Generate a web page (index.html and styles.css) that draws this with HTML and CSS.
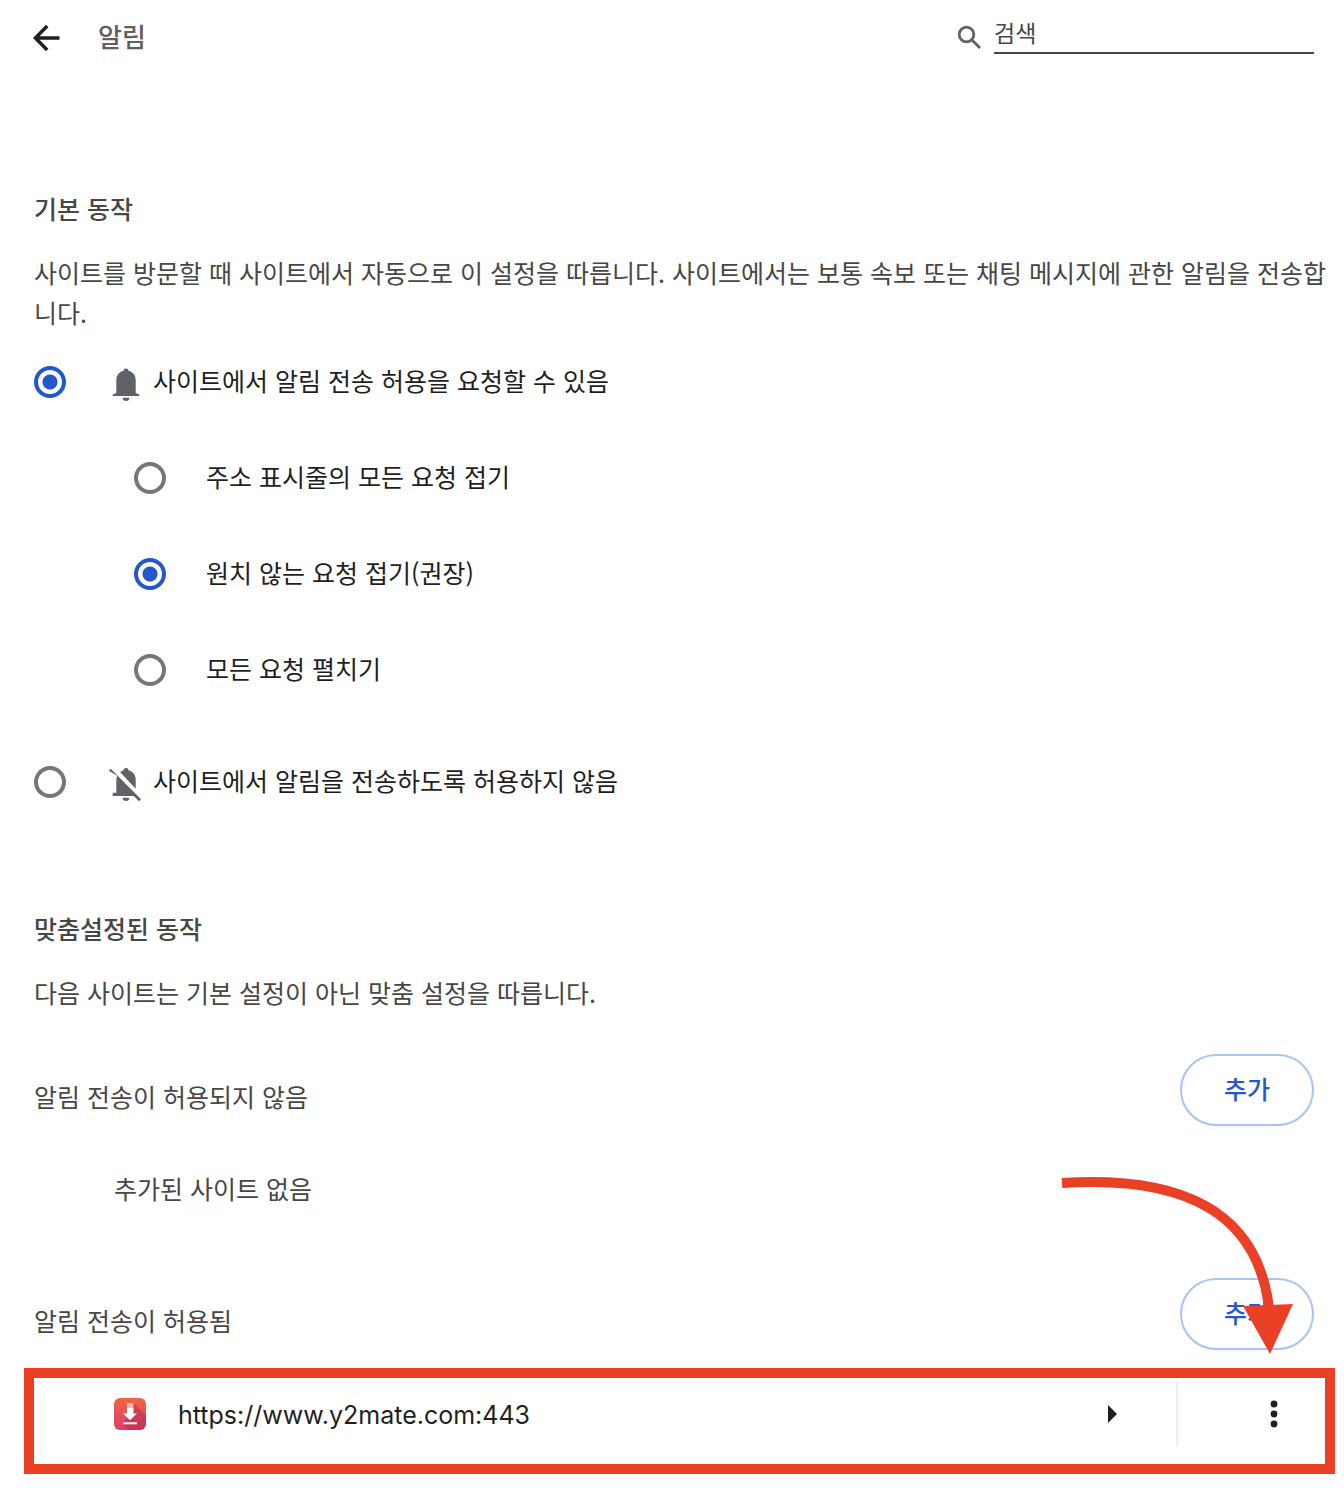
FILE: index.html
```html
<!DOCTYPE html>
<html lang="ko">
<head>
  <meta charset="UTF-8" />
  <meta name="viewport" content="width=device-width, initial-scale=1.0"/>
  <title>알림</title>
  <link rel="stylesheet" href="styles.css">
</head>
<body>
  <header class="toolbar">
    <button class="icon-button back" type="button" aria-label="뒤로">
      <svg width="28" height="28" viewBox="0 0 28 28" fill="none" stroke="#1f1f1f" stroke-width="3.4">
        <path d="M27.500 14H4M15.200 2L3.400 14l11.800 12"/>
      </svg>
    </button>
    <h1>알림</h1>
    <div class="search">
      <label for="search" aria-label="검색">
        <svg width="26" height="26" viewBox="0 0 26 26" fill="none" stroke="#5f6368" stroke-width="2.800">
          <circle cx="10.500" cy="9.500" r="7.300"/>
          <path d="M15.500 14.500l8.500 8.500"/>
        </svg>
      </label>
      <input type="text" id="search" placeholder="검색" />
    </div>
  </header>

  <main>
    <section class="section">
      <h2>기본 동작</h2>
      <p class="intro">사이트를 방문할 때 사이트에서 자동으로 이 설정을 따릅니다. 사이트에서는 보통 속보 또는 채팅 메시지에 관한 알림을 전송합니다.</p>

      <label class="option">
        <input type="radio" name="default" checked />
        <svg class="bell" width="40" height="40" viewBox="0 0 40 40" fill="#5f6368">
          <path d="M20 4.500a2.500 2.500 0 0 1 2.500 2.300c4.300 1.100 7.200 4.700 7.200 9.200V29l3.600 1.500V32H6.700v-1.500l3.600-1.500V16c0-4.500 2.900-8.100 7.200-9.200A2.500 2.500 0 0 1 20 4.500zM16.700 33.700h6.600a3.300 3.300 0 0 1-6.600 0z"/>
        </svg>
        <span>사이트에서 알림 전송 허용을 요청할 수 있음</span>
      </label>

      <div class="sub-options">
        <label class="option">
          <input type="radio" name="requests" />
          <span>주소 표시줄의 모든 요청 접기</span>
        </label>
        <label class="option">
          <input type="radio" name="requests" checked />
          <span>원치 않는 요청 접기(권장)</span>
        </label>
        <label class="option">
          <input type="radio" name="requests" />
          <span>모든 요청 펼치기</span>
        </label>
      </div>

      <label class="option">
        <input type="radio" name="default" />
        <svg class="bell" width="40" height="40" viewBox="0 0 40 40" fill="#5f6368">
          <path d="M20 4a2.500 2.500 0 0 1 2.500 2.300c4.300 1.100 7.200 4.700 7.200 9.200v9.200L14.300 8.300a10 10 0 0 1 3.200-2A2.500 2.500 0 0 1 20 4z"/>
          <path d="M4.700 4.700L35 35.300l-2 2L27.700 32H6.700v-3.300h3.600V16c0-1.500.3-2.900.9-4.200L2.800 6.700z"/>
          <path d="M16.700 33.700h6.600a3.300 3.300 0 0 1-6.600 0z"/>
        </svg>
        <span>사이트에서 알림을 전송하도록 허용하지 않음</span>
      </label>
    </section>

    <section class="section custom">
      <h2>맞춤설정된 동작</h2>
      <p class="intro">다음 사이트는 기본 설정이 아닌 맞춤 설정을 따릅니다.</p>

      <div class="list-header">
        <h3>알림 전송이 허용되지 않음</h3>
        <button class="add" type="button">추가</button>
      </div>
      <p class="empty">추가된 사이트 없음</p>

      <div class="list-header">
        <h3>알림 전송이 허용됨</h3>
        <button class="add" type="button">추가</button>
      </div>
      <div class="site">
        <svg width="32" height="32" viewBox="0 0 32 32">
          <defs>
            <linearGradient id="favicon" x1="0" y1="0" x2="0" y2="1">
              <stop offset="0" stop-color="#ee6644"/>
              <stop offset="1" stop-color="#e23a6c"/>
            </linearGradient>
          </defs>
          <rect width="32" height="32" rx="6" fill="url(#favicon)"/>
          <path d="M19.500 5L32 17.500V26a6 6 0 0 1-6 6H14l-5-6 8-12z" fill="#a62b4c" opacity=".45"/>
          <path d="M13 10h6.500v5.500H23L16 22.300 9 15.500h4z" fill="#fff"/>
          <path d="M13 5h6.500v5H13z" fill="#f3b5ad"/>
          <path d="M9 24.300h14v2H9z" fill="#fff"/>
        </svg>
        <span class="url">https://www.y2mate.com:443</span>
        <button class="icon-button details" type="button" aria-label="세부정보">
          <svg width="10" height="18" viewBox="0 0 10 18" fill="#1f1f1f"><path d="M1 0l9 9-9 9z"/></svg>
        </button>
        <button class="icon-button more" type="button" aria-label="추가 작업">
          <svg width="8" height="28" viewBox="0 0 8 28" fill="#1f1f1f">
            <circle cx="4" cy="4" r="3.400"/>
            <circle cx="4" cy="14" r="3.400"/>
            <circle cx="4" cy="24" r="3.400"/>
          </svg>
        </button>
        <svg class="arrow" width="240" height="180" viewBox="0 0 240 180">
          <path d="M2 9C130 1 198 42 209 134" fill="none" stroke="#ea4025" stroke-width="10"/>
          <path d="M183 132l50-2-23 50z" fill="#ea4025"/>
        </svg>
      </div>
    </section>
  </main>
</body>
</html>
```

FILE: styles.css
```css
:root {
  --text: #1f1f1f;
  --text-secondary: #474747;
  --accent: #2456cc;
  --accent-border: #a8c3f7;
  --radio-off: #747775;
  --mark: #ea4025;
}

* {
  margin: 0;
  padding: 0;
  box-sizing: border-box;
}

body {
  background: #fff;
  color: var(--text-secondary);
  font-family: 'Noto Sans CJK KR', sans-serif;
  font-size: 25px;
  line-height: 40px;
  padding: 0 30px 38px 34px;
}

button,
input {
  font-family: inherit;
}

svg {
  display: block;
  flex-shrink: 0;
}

.icon-button {
  display: flex;
  align-items: center;
  justify-content: center;
  border: none;
  background: none;
  cursor: pointer;
}

.toolbar {
  display: flex;
  align-items: center;
  height: 76px;
}

.back {
  width: 28px;
  height: 48px;
  margin-left: -2px;
}

h1 {
  margin-left: 38px;
  padding-bottom: 4px;
  font-size: 26px;
  font-weight: 500;
  color: #5f5f5f;
}

.search {
  display: flex;
  align-items: center;
  gap: 12px;
  margin-left: auto;
}

.search input {
  width: 320px;
  height: 40px;
  margin-bottom: 8px;
  padding-bottom: 2px;
  border: none;
  border-bottom: 2px solid var(--text-secondary);
  outline: none;
  background: none;
  font-size: 23px;
  color: var(--text);
}

.search input::placeholder {
  color: var(--text-secondary);
  opacity: 1;
}

.section {
  padding-top: 112px;
}

.custom {
  padding-top: 102px;
}

h2 {
  font-size: 25px;
  font-weight: 500;
}

.intro {
  margin: 24px -16px 0 0;
}

.option {
  display: flex;
  align-items: center;
  height: 48px;
  color: var(--text);
  cursor: pointer;
}

.option span {
  padding-bottom: 4px;
}

.intro + .option {
  margin-top: 26px;
}

.option input {
  appearance: none;
  flex-shrink: 0;
  width: 32px;
  height: 32px;
  border: 4px solid var(--radio-off);
  border-radius: 50%;
}

.option input:checked {
  border-color: var(--accent);
  background: radial-gradient(circle, var(--accent) 7px, transparent 8px);
}

.bell {
  margin: 4px 7px 0 40px;
}

.sub-options {
  display: flex;
  flex-direction: column;
  gap: 48px;
  padding: 48px 0 64px 100px;
}

.sub-options .option {
  gap: 40px;
}

.list-header {
  display: flex;
  align-items: flex-end;
  justify-content: space-between;
}

.intro + .list-header {
  margin-top: 42px;
}

h3 {
  padding-bottom: 10px;
  font-size: 25px;
  font-weight: 400;
}

.add {
  width: 134px;
  height: 72px;
  padding-bottom: 4px;
  border: 2px solid var(--accent-border);
  border-radius: 36px;
  background: #fff;
  color: var(--accent);
  font-size: 25px;
  font-weight: 500;
  cursor: pointer;
}

.empty {
  padding: 42px 0 70px 80px;
}

.site {
  position: relative;
  display: flex;
  align-items: center;
  margin: 18px -21px 0 -10px;
  padding: 4px 0 18px 80px;
  border: 10px solid var(--mark);
}

.url {
  margin-left: 32px;
  padding-top: 2px;
  font-family: Inter, sans-serif;
  font-size: 25px;
  color: var(--text);
}

.details {
  width: 64px;
  height: 64px;
  margin-left: auto;
}

.more {
  width: 149px;
  height: 64px;
  margin-left: 32px;
  padding-left: 45px;
  border-left: 2px solid #eee;
}

.arrow {
  position: absolute;
  right: 25px;
  bottom: 110px;
  pointer-events: none;
}
```
